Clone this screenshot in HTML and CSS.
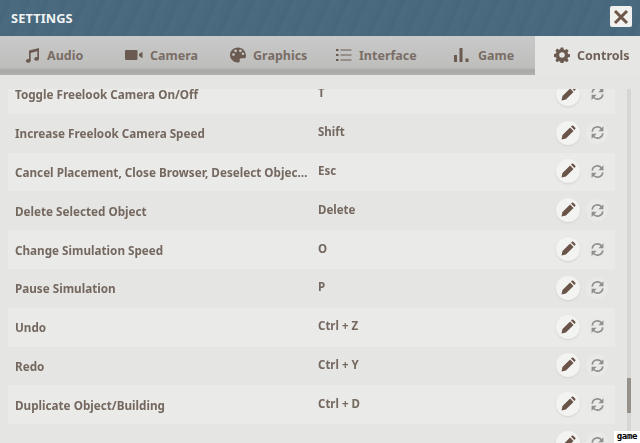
FILE: index.html
```html
<!DOCTYPE html>
<html lang="en">
<head>
<meta charset="utf-8">
<title>Settings</title>
<link rel="stylesheet" href="styles.css">
</head>
<body>
<svg class="defs" width="0" height="0" aria-hidden="true">
  <symbol id="pencil" viewBox="0 0 16 16"><path d="M1.500 14.500l1-4.400 7.600-7.600 3.400 3.400-7.600 7.600z M11 1.600l.9-.9c.4-.4 1-.4 1.400 0l2 2c.4.4.4 1 0 1.400l-.9.9z"/></symbol>
  <symbol id="sync" viewBox="0 0 16 16"><path fill="none" stroke="currentColor" stroke-width="1.800" d="M2.400 7A5.600 5.600 0 0 1 12.600 4.400M13.600 9A5.600 5.600 0 0 1 3.400 11.600"/><path d="M14.300 1.200v5.400H8.900zM1.700 14.800V9.400h5.400z"/></symbol>
</svg>
<main class="window">
  <header class="title-bar">
    <h1 class="title">SETTINGS</h1>
    <button class="close" aria-label="Close"><svg viewBox="0 0 16 16" width="16" height="16"><path d="M2 2l12 12M14 2L2 14"/></svg></button>
  </header>
  <nav class="tabs">
    <a class="tab tab-audio"><svg class="tab-icon" viewBox="0 0 16 16"><path d="M5 3.400L15 1v10.800a2.400 1.900 0 1 1-1.700-1.700V4.300L6.700 5.900v7.900a2.400 1.900 0 1 1-1.700-1.700z"/></svg>Audio</a>
    <a class="tab tab-camera"><svg class="tab-icon wide" viewBox="0 0 18 12"><rect x="0" y="1" width="12.500" height="10" rx="1.200"/><path d="M14 5l3.500-2.200v6.400L14 7z"/></svg>Camera</a>
    <a class="tab tab-graphics"><svg class="tab-icon" viewBox="0 0 16 16"><path fill-rule="evenodd" d="M8 .5C3.600.5 0 3.800 0 8s3.600 7.500 8 7.500c1.400 0 2-.8 1.700-1.800-.4-1.300.2-2.400 1.800-2.400h2.600c1.200 0 1.900-.9 1.900-2.300C16 4 12.400.5 8 .5zM3.500 9a1.400 1.400 0 1 1 0-2.800 1.400 1.400 0 0 1 0 2.800zM5.600 5.200a1.400 1.400 0 1 1 0-2.800 1.400 1.400 0 0 1 0 2.800zM10.400 5.200a1.400 1.400 0 1 1 0-2.800 1.400 1.400 0 0 1 0 2.800zM13 8a1.300 1.300 0 1 1 0-2.600A1.300 1.300 0 0 1 13 8z"/></svg>Graphics</a>
    <a class="tab tab-interface"><svg class="tab-icon" viewBox="0 0 16 14"><path d="M0 1h2.500v2H0zM0 6h2.500v2H0zM0 11h2.500v2H0zM4.500 1.400H15.500v1.200H4.500zM4.500 6.400H15.500v1.200H4.500zM4.500 11.400H15.500v1.200H4.500z"/></svg>Interface</a>
    <a class="tab tab-game"><svg class="tab-icon" viewBox="0 0 16 16"><path d="M1 8h3v7H1zM6.500 1h3v14h-3zM12.500 11.500h3V15h-3z"/></svg>Game</a>
    <a class="tab tab-controls active"><svg class="tab-icon" viewBox="0 0 16 16"><path fill-rule="evenodd" d="M6.700.5h2.600l.4 2 1.300.6 1.800-1.100 1.800 1.800-1.100 1.800.6 1.300 2 .4v2.600l-2 .4-.6 1.300 1.100 1.800-1.800 1.800-1.800-1.100-1.300.6-.4 2H6.700l-.4-2-1.300-.6-1.800 1.100-1.800-1.800 1.100-1.800-.6-1.300-2-.4V6.900l2-.4.6-1.300L1.400 3.400l1.800-1.800L5 2.700l1.300-.6zM8 5.200a2.800 2.800 0 1 0 0 5.600 2.800 2.800 0 0 0 0-5.600z"/></svg>Controls</a>
  </nav>
  <section class="content">
    <div class="list">
      <div class="rows">
        <div class="row alt"><span class="name">Toggle Freelook Camera On/Off</span><span class="key">T</span><span class="actions"><button class="edit"><svg><use href="#pencil"/></svg></button><button class="reset"><svg><use href="#sync"/></svg></button></span></div>
        <div class="row"><span class="name">Increase Freelook Camera Speed</span><span class="key">Shift</span><span class="actions"><button class="edit"><svg><use href="#pencil"/></svg></button><button class="reset"><svg><use href="#sync"/></svg></button></span></div>
        <div class="row alt"><span class="name">Cancel Placement, Close Browser, Deselect Object Mode</span><span class="key">Esc</span><span class="actions"><button class="edit"><svg><use href="#pencil"/></svg></button><button class="reset"><svg><use href="#sync"/></svg></button></span></div>
        <div class="row"><span class="name">Delete Selected Object</span><span class="key">Delete</span><span class="actions"><button class="edit"><svg><use href="#pencil"/></svg></button><button class="reset"><svg><use href="#sync"/></svg></button></span></div>
        <div class="row alt"><span class="name">Change Simulation Speed</span><span class="key">O</span><span class="actions"><button class="edit"><svg><use href="#pencil"/></svg></button><button class="reset"><svg><use href="#sync"/></svg></button></span></div>
        <div class="row"><span class="name">Pause Simulation</span><span class="key">P</span><span class="actions"><button class="edit"><svg><use href="#pencil"/></svg></button><button class="reset"><svg><use href="#sync"/></svg></button></span></div>
        <div class="row alt"><span class="name">Undo</span><span class="key">Ctrl + Z</span><span class="actions"><button class="edit"><svg><use href="#pencil"/></svg></button><button class="reset"><svg><use href="#sync"/></svg></button></span></div>
        <div class="row"><span class="name">Redo</span><span class="key">Ctrl + Y</span><span class="actions"><button class="edit"><svg><use href="#pencil"/></svg></button><button class="reset"><svg><use href="#sync"/></svg></button></span></div>
        <div class="row alt"><span class="name">Duplicate Object/Building</span><span class="key">Ctrl + D</span><span class="actions"><button class="edit"><svg><use href="#pencil"/></svg></button><button class="reset"><svg><use href="#sync"/></svg></button></span></div>
        <div class="row"><span class="name"></span><span class="key"></span><span class="actions"><button class="edit"><svg><use href="#pencil"/></svg></button><button class="reset"><svg><use href="#sync"/></svg></button></span></div>
      </div>
    </div>
    <div class="scrollbar"><div class="thumb"></div></div>
  </section>
</main>
<span class="watermark">game</span>
</body>
</html>
```
FILE: styles.css
```css
* { box-sizing: border-box; }
html, body { margin: 0; height: 100%; overflow: hidden; }
body { font-family: "Noto Sans", "Open Sans", sans-serif; background: #e5e5e4; }
.defs { position: absolute; }
.window { display: flex; flex-direction: column; width: 640px; height: 443px; filter: blur(.35px); }

.title-bar {
  height: 36px; flex: none; display: flex; align-items: center; justify-content: space-between;
  padding: 0 8px 0 11px;
  background: repeating-linear-gradient(115deg, #49697e 0 6px, #47677c 6px 11px, #4a6a7f 11px 17px);
}
.title { margin: 0; font-size: 12.800px; font-weight: 700; color: #f1f3f3; letter-spacing: .1px; }
.close {
  width: 22px; height: 21px; padding: 0; border: 0; border-radius: 2px; background: #f0f0ee;
  display: flex; align-items: center; justify-content: center; margin-top: -3px;
}
.close svg { display: block; }
.close path { fill: none; stroke: #6d5549; stroke-width: 3; }

.tabs {
  height: 39px; flex: none; display: flex;
  background: linear-gradient(#c8c9c8 0, #bebfbd 80%, #a9a9a8 88%, #b0b0af 100%);
}
.tab {
  display: flex; align-items: center; padding-bottom: 1px; gap: 7px; font-size: 12.500px; font-weight: 700; color: #7a6d66;
  white-space: nowrap;
}
.tab-icon { width: 16px; height: 16px; fill: #6b5a50; flex: none; }
.tab-icon.wide { width: 18px; height: 12px; }
.tab-audio { width: 124px; padding-left: 24px; }
.tab-camera { width: 105px; padding-left: 1px; }
.tab-graphics { width: 107px; padding-left: 1px; }
.tab-interface { width: 117px; padding-left: 0; }
.tab-game { width: 82px; gap: 9px; }
.tab-controls { flex: 1; padding-left: 19px; }
.tab.active { background: #e6e6e5; color: #6f6058; }

.content { flex: 1; display: flex; padding-top: 14px; min-height: 0; }
.list { width: 615px; padding-left: 8px; overflow: hidden; }
.rows { margin-top: -14px; }
.row { height: 38.800px; display: flex; align-items: center; }
.row.alt { background: #eaeae9; }
.name {
  width: 310px; padding: 0 9px 0 7px; font-size: 11.700px; font-weight: 700; color: #74685f;
  white-space: nowrap; overflow: hidden; text-overflow: ellipsis;
}
.key { flex: 1; font-size: 11.500px; font-weight: 700; color: #74685f; margin-top: -3px; }
.actions { display: flex; align-items: center; gap: 6px; width: 59px; margin-top: -1px; }
.edit, .reset { padding: 0; border: 0; border-radius: 50%; display: flex; align-items: center; justify-content: center; }
.edit { width: 24px; height: 24px; background: #f3f3f2; box-shadow: 0 1px 2px #d2d2d1; color: #6a5448; }
.edit svg { width: 16px; height: 16px; fill: currentColor; }
.reset { width: 22px; height: 22px; background: #e9e9e8; color: #8f8f8d; }
.reset svg { width: 15px; height: 15px; fill: currentColor; }

.scrollbar { width: 4px; margin-left: 12px; background: #d6d6d5; position: relative; }
.thumb { position: absolute; left: 0; top: 289px; width: 4px; height: 35px; background: #95908a; }

.watermark {
  position: absolute; right: 0; bottom: 0; width: 26px; height: 12px; background: #fff; color: #000;
  font: 700 9px/11px "DejaVu Sans Mono", monospace; text-align: center; letter-spacing: -.3px;
}
```
